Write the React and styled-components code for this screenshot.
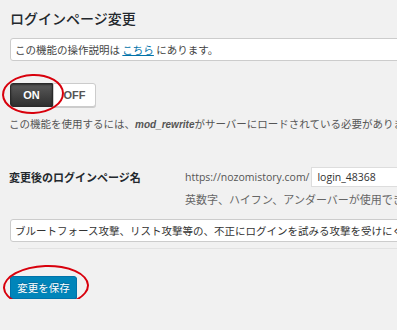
import React from 'react';
import styled, { createGlobalStyle } from 'styled-components';

const GlobalStyle = createGlobalStyle`
    html, body {
        margin: 0;
        padding: 0;
        background: #f1f1f1;
        overflow: hidden;
    }
    body {
        font-family: "Noto Sans CJK JP", "Noto Sans", sans-serif;
        color: #444;
    }
`;

const App = () => {
    return (
        <>
            <GlobalStyle />
            <Page>
                <Title>ログインページ変更</Title>

                <InfoBox>
                    この機能の操作説明は <Link>こちら</Link> にあります。
                </InfoBox>

                <ToggleRow>
                    <ToggleButton $active>ON</ToggleButton>
                    <ToggleButton>OFF</ToggleButton>
                    <Mark $w={62} $h={40} $x={-8} $y={-9} />
                </ToggleRow>

                <Note>
                    この機能を使用するには、<Code>mod_rewrite</Code>がサーバーにロードされている必要があります。
                </Note>

                <FieldRow>
                    <FieldLabel>変更後のログインページ名</FieldLabel>
                    <FieldBody>
                        <UrlLine>
                            <span>https://nozomistory.com/</span>
                            <UrlInput value="login_48368" readOnly />
                        </UrlLine>
                        <Hint>英数字、ハイフン、アンダーバーが使用できます。</Hint>
                    </FieldBody>
                </FieldRow>

                <WideInput
                    value="ブルートフォース攻撃、リスト攻撃等の、不正にログインを試みる攻撃を受けにくくなります。"
                    readOnly
                />

                <Divider />

                <SaveRow>
                    <SaveButton>変更を保存</SaveButton>
                    <Mark $w={86} $h={43} $x={-7} $y={-8} />
                </SaveRow>
            </Page>
        </>
    );
};

export default App;

const Page = styled.div`
    width: 620px;
    padding: 10px 0 0 9px;
`;

const Title = styled.h2`
    margin: 0 0 0 1px;
    font-size: 14px;
    line-height: 17px;
    font-weight: 500;
    color: #23282d;
`;

const InfoBox = styled.div`
    margin: 11px 0 0 1px;
    height: 21px;
    line-height: 21px;
    padding-left: 4px;
    background: #fff;
    border: 1px solid #ccc;
    border-radius: 3px;
    font-size: 10.5px;
    color: #444;
`;

const Link = styled.a`
    color: #0073aa;
    text-decoration: underline;
`;

const ToggleRow = styled.div`
    position: relative;
    display: flex;
    margin: 22px 0 0 1px;
    width: max-content;
`;

const ToggleButton = styled.div`
    width: 43px;
    height: 24px;
    box-sizing: border-box;
    display: flex;
    align-items: center;
    justify-content: center;
    font-family: "Liberation Sans", Arial, sans-serif;
    font-size: 11px;
    font-weight: 700;
    color: ${p => (p.$active ? '#fff' : '#555')};
    background: ${p => (p.$active ? 'linear-gradient(#5a5a5a, #2f2f2f)' : '#fff')};
    border: 1px solid ${p => (p.$active ? '#2a2a2a' : '#ccc')};
    border-radius: ${p => (p.$active ? '3px 0 0 3px' : '0 3px 3px 0')};
    box-shadow: ${p => (p.$active ? 'inset 0 1px 2px rgba(0,0,0,0.5)' : '0 1px 0 #ccc')};
`;

const Mark = styled.div`
    position: absolute;
    left: ${p => p.$x}px;
    top: ${p => p.$y}px;
    width: ${p => p.$w}px;
    height: ${p => p.$h}px;
    box-sizing: border-box;
    border: 2.5px solid #d8000c;
    border-radius: 50%;
    transform: rotate(-2deg);
    pointer-events: none;
`;

const Note = styled.p`
    margin: 10px 0 0 0;
    font-size: 10.5px;
    line-height: 14px;
    white-space: nowrap;
    color: #555;
`;

const Code = styled.i`
    font-family: "Liberation Sans", Arial, sans-serif;
    font-size: 10px;
    font-weight: 700;
    color: #555;
`;

const FieldRow = styled.div`
    display: flex;
    margin-top: 35px;
`;

const FieldLabel = styled.div`
    width: 176px;
    font-size: 11px;
    font-weight: 700;
    line-height: 20px;
    color: #23282d;
`;

const FieldBody = styled.div`
    display: flex;
    flex-direction: column;
    gap: 3px;
`;

const UrlLine = styled.div`
    display: flex;
    align-items: center;
    font-family: "Open Sans", "Noto Sans", sans-serif;
    font-size: 10.5px;
    color: #555;
`;

const UrlInput = styled.input`
    width: 200px;
    height: 20px;
    box-sizing: border-box;
    margin-left: 2px;
    padding: 0 5px;
    border: 1px solid #ddd;
    background: #fff;
    font-family: "Open Sans", "Noto Sans", sans-serif;
    font-size: 10.5px;
    color: #333;
    outline: none;
`;

const Hint = styled.div`
    font-size: 11px;
    line-height: 18px;
    color: #666;
    white-space: nowrap;
`;

const WideInput = styled.input`
    display: block;
    margin: 11px 0 0 1px;
    width: 600px;
    height: 23px;
    box-sizing: border-box;
    padding: 0 4px;
    background: #fff;
    border: 1px solid #ccc;
    border-radius: 3px;
    font-family: "Noto Sans CJK JP", sans-serif;
    font-size: 10.5px;
    color: #333;
    outline: none;
`;

const Divider = styled.hr`
    margin: 6px 0 0 9px;
    border: 0;
    border-top: 1px solid #e2e2e2;
`;

const SaveRow = styled.div`
    position: relative;
    margin: 24px 0 0 1px;
    width: max-content;
`;

const SaveButton = styled.button`
    width: 67px;
    height: 23px;
    padding: 0;
    background: #0085ba;
    border: 1px solid #0073aa;
    border-radius: 3px;
    box-shadow: 0 1px 0 #006799;
    color: #fff;
    font-family: "Noto Sans CJK JP", sans-serif;
    font-size: 10.5px;
    text-shadow: 0 -1px 1px #006799;
`;
